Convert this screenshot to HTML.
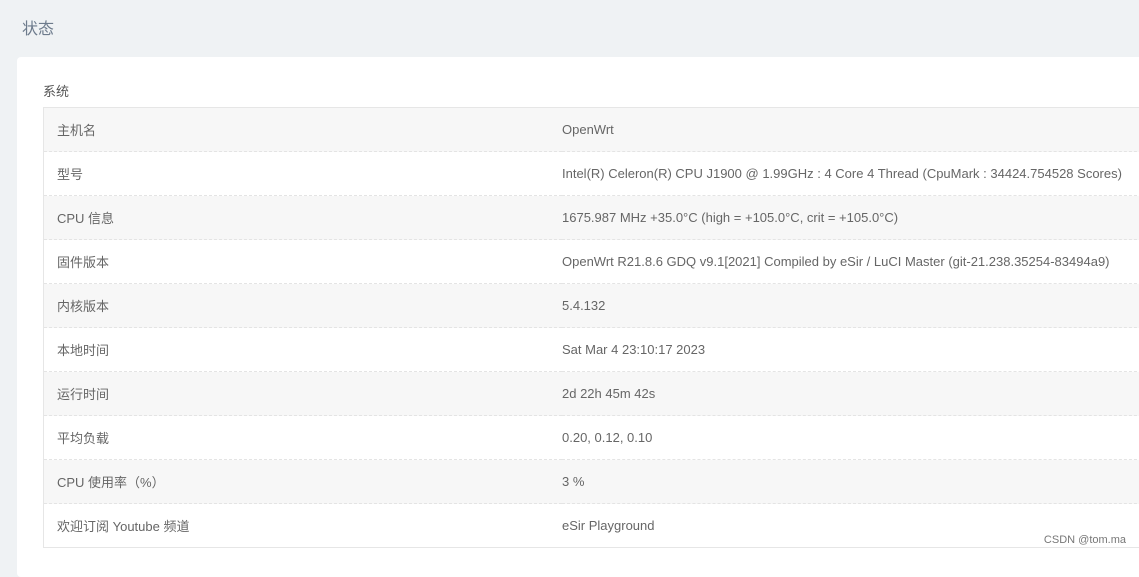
<!DOCTYPE html><html><head><meta charset="utf-8"><style>
body{margin:0;width:1139px;height:555px;overflow:hidden;background:#eff2f4;font-family:"Liberation Sans","Noto Sans CJK SC",sans-serif;position:relative}
.t{position:absolute;left:22px;top:15px;font-size:16px;color:#6d7b8c}
.card{position:absolute;left:17px;top:57px;width:1140px;height:520px;background:#fff;border-radius:4px}
.s{position:absolute;left:43px;top:81px;font-size:13px;color:#555}
table{position:absolute;left:43px;top:107px;width:1110px;border-collapse:collapse;border:1px solid #e6e6e6;font-size:13px;color:#666}
td{height:43px;padding:0;border-bottom:1px dashed #e4e4e4}
td:first-child{padding-left:13px;width:505px}
tr:nth-child(odd){background:#f7f7f7}
.w{position:absolute;right:13px;top:534px;font-size:11px;color:#777}
</style></head><body>
<div class="t">状态</div>
<div class="card"></div>
<div class="s">系统</div>
<table>
<tr><td>主机名</td><td>OpenWrt</td></tr>
<tr><td>型号</td><td>Intel(R) Celeron(R) CPU J1900 @ 1.99GHz : 4 Core 4 Thread (CpuMark : 34424.754528 Scores)</td></tr>
<tr><td>CPU 信息</td><td>1675.987 MHz +35.0°C (high = +105.0°C, crit = +105.0°C)</td></tr>
<tr><td>固件版本</td><td>OpenWrt R21.8.6 GDQ v9.1[2021] Compiled by eSir / LuCI Master (git-21.238.35254-83494a9)</td></tr>
<tr><td>内核版本</td><td>5.4.132</td></tr>
<tr><td>本地时间</td><td>Sat Mar 4 23:10:17 2023</td></tr>
<tr><td>运行时间</td><td>2d 22h 45m 42s</td></tr>
<tr><td>平均负载</td><td>0.20, 0.12, 0.10</td></tr>
<tr><td>CPU 使用率（%）</td><td>3 %</td></tr>
<tr><td>欢迎订阅 Youtube 频道</td><td>eSir Playground</td></tr>
</table>
<div class="w">CSDN @tom.ma</div>
</body></html>
